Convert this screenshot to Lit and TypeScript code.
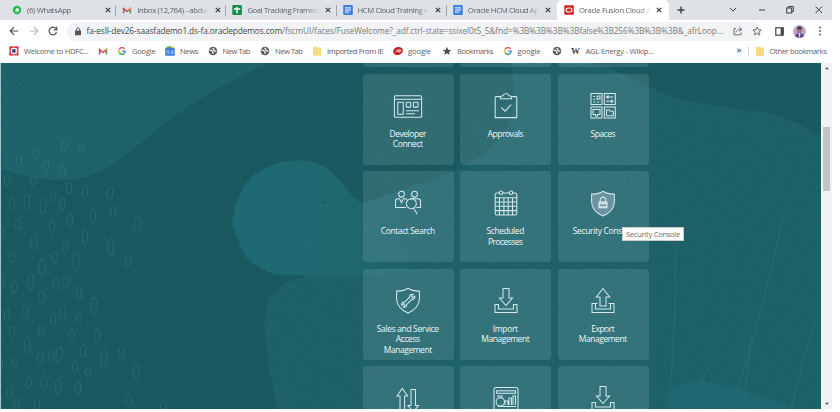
import { LitElement, html, svg, css } from "lit";
import { customElement, property } from "lit/decorators.js";

/** A line of text whose tracking is set so that it spans a given width. */
@customElement("fit-text")
class FitText extends LitElement {
  @property({ type: Number }) width = 0;
  @property() text = "";
  static styles = css`
    :host { display: inline-block; white-space: nowrap; flex: none; }
    span { display: inline-block; white-space: pre; }
  `;
  updated() {
    const s = this.renderRoot.querySelector("span") as HTMLElement;
    s.style.letterSpacing = "0";
    const natural = s.getBoundingClientRect().width;
    if (this.width && natural) {
      s.style.letterSpacing = `${(this.width - natural) / this.text.length}px`;
    }
  }
  render() {
    return html`<span>${this.text}</span>`;
  }
}

const glyphs: Record<string, unknown> = {
  whatsapp: svg`<circle cx="5" cy="5" r="4.2" fill="#1fc04f"/><path d="M3.400 7l.3-1.500a1.700 1.700 0 1 1 1 1z" fill="#fff"/>`,
  gmail: svg`<path d="M1 8.2V2.6L5 5.5 9 2.6v5.6" fill="none" stroke="#fff"/><path d="M.8 2.8h1.7v5.6H.8z" fill="#7a6db5"/><path d="M7.5 2.8h1.7v5.6H7.5z" fill="#45965a"/><path d="M.8 2.2L5 5.5l4.2-3.3v2L5 7.2.8 4.2z" fill="#dc4236"/><path d="M7.5 3.2l1.7-1.4v2.4L7.5 5.3z" fill="#edb62c"/>`,
  sheet: svg`<rect x=".3" y="0" width="9.6" height="10" rx="1" fill="#168d4d"/><path d="M5 2v6.2M2 4h6.2" stroke="#fff" stroke-width="1.5"/>`,
  doc: svg`<rect x=".2" y="0" width="9.6" height="10" rx="1" fill="#3e7fe0"/><path d="M2 2.9h6M2 5h6M2 7.1h4" stroke="#fff"/>`,
  oracle: svg`<rect x=".3" y=".3" width="9.5" height="9.4" rx=".8" fill="#d8201e"/><rect x="2.2" y="3" width="5.7" height="4" rx="1.8" fill="none" stroke="#fff" stroke-width="1.2"/>`,
  hdfc: svg`<rect x=".3" y=".3" width="9.2" height="9.2" fill="#dc3440"/><rect x="2" y="2" width="5.8" height="5.8" fill="#fff"/><rect x="3.2" y="3.2" width="3.400" height="3.400" fill="#174b94"/><path d="M4.9 0v2M4.9 7.8v2M0 4.9h2M7.8 4.9h2" stroke="#fff" stroke-width=".5"/>`,
  google: svg`<g fill="none" stroke-width="1.4"><path d="M7.6 2.8A3.3 3.3 0 0 0 2.2 3.3" stroke="#e5483a"/><path d="M2.2 3.3a3.3 3.3 0 0 0 0 3.4" stroke="#f1b51c"/><path d="M2.2 6.7a3.3 3.3 0 0 0 5 .8" stroke="#3aa757"/><path d="M7.2 7.5A3.2 3.2 0 0 0 8.2 5.1H5" stroke="#4386ed"/></g>`,
  news: svg`<path d="M1.500 1L6 0l.5 2.300H1.500z" fill="#49a25c"/><path d="M6 .5l3 .5v2H5.500z" fill="#e7b83b"/><rect x=".2" y="2.1" width="9.6" height="7.700" rx=".8" fill="#3f7fdc"/><path d="M4.2 4.900a1.400 1.400 0 1 0 .3 1.300H3.300M6 5h2.500M6 6.200h2.500M6 7.400h2.500" stroke="#e6effd" fill="none" stroke-width=".6"/>`,
  globe: svg`<circle cx="5" cy="5" r="4.300" fill="#55595e"/><path d="M1.200 4.200C3 4 4.500 4.300 4.300 5.300s1 1 .8 2.600M5 1.700c-.6 1.600 1.200.7 1 1.600S5.200 4.500 6.200 5s1.300-.2 2.300.3" stroke="#fff" stroke-width="1.150" fill="none"/>`,
  folder: svg`<path d="M1 .8h3.500l.8.8h3.700v7.700H1z" fill="#f6dc80"/><path d="M1 9.300h8" stroke="#e6c566" stroke-width=".5"/>`,
  red: svg`<ellipse cx="5" cy="5" rx="4.900" ry="3.900" transform="rotate(-20 5 5)" fill="#c8171e"/><path d="M2.400 6.400L4.800 3.400l.2 2.800M5.600 6.100l.6-2.400 1.600.2-.5 1.900z" stroke="#fff" stroke-width=".8" fill="none"/>`,
  star: svg`<path d="M5 .8l1.200 2.900 3.100.2-2.400 2 .8 3L5 7.300 2.300 8.900l.8-3-2.400-2 3.100-.2z" fill="#484c50"/>`,
};
const glyph = (n: string) => html`<svg class="glyph" viewBox="0 0 10 10">${glyphs[n]}</svg>`;

const tabs: [string, string, number][] = [
  ["whatsapp", "(6) WhatsApp", 44],
  ["gmail", "Inbox (12,764) - abdul", 71],
  ["sheet", "Goal Tracking Framew", 72],
  ["doc", "HCM Cloud Training v", 70],
  ["doc", "Oracle HCM Cloud Ap", 71],
  ["oracle", "Oracle Fusion Cloud A", 72],
];

// icon, label, label width, width of the slot up to the next bookmark
const bookmarks: [string, string, number, number][] = [
  ["hdfc", "Welcome to HDFC...", 64.5, 88.5],
  ["gmail", "", 0, 19.5],
  ["google", "Google", 23.5, 48],
  ["news", "News", 18, 42.5],
  ["globe", "New Tab", 27.500, 52.500],
  ["globe", "New Tab", 27.500, 52],
  ["folder", "Imported From IE", 56, 81],
  ["red", "google", 23, 49],
  ["star", "Bookmarks", 36, 60.500],
  ["google", "google", 23, 49],
  ["globe", "", 0, 19],
  ["wiki", "AGL Energy - Wikip...", 68, 90],
];

const shield = svg`<path d="M15 1.300C11.500 3.700 8 4.200 3.600 4.100v7.500c0 7 5.200 11.800 11.400 14.500 6.200-2.700 11.400-7.500 11.400-14.500V4.100C22 4.200 18.500 3.700 15 1.300z"/>`;
const importIcon = svg`<path d="M12 1.500h6v9.500h3.500L15 18.500 8.500 11H12z"/><path d="M4 17.500h3.500V22h15v-4.500H26v8H4z"/>`;

const icons: Record<string, unknown> = {
  developer: svg`<rect x="1.400" y="3.800" width="27.200" height="21.500" rx="1"/><path d="M1.400 7.300h27.200"/><rect x="4.800" y="10.300" width="5.500" height="12"/><rect x="13.300" y="10.300" width="4.500" height="4.800" rx=".7"/><rect x="20.500" y="10.300" width="4.500" height="4.800" rx=".7"/><path d="M13 18.700h13M13 21.700h9"/>`,
  approvals: svg`<path d="M10 4.600H5.200q-1 0-1 1v20h21.600v-20q0-1-1-1H20"/><path d="M9.500 6.800V5.200q0-1.300 2.600-1.500a3 3 0 0 1 5.800 0q2.600.2 2.600 1.500v1.600z"/><path d="M10.200 15.300l3.800 3.900 6.200-6.600"/>`,
  spaces: svg`<rect x="3" y="1.500" width="11" height="11"/><rect x="16.300" y="1.500" width="11" height="11"/><rect x="3" y="15" width="11" height="11"/><rect x="16.300" y="15" width="11" height="11"/><path d="M5.300 4.500h2M5.300 7.200h2M5.300 10h2M9 10h2M9.300 8V4h2.700v3H9.300M18.500 5h7M20.500 3.500L18.500 5l2 1.500M18 9.200h7M23 7.700l2 1.500-2 1.500M5 17.500h7v5H9.500v1.500h-2v-1.500H5zM18.500 18h3l1 1.300h2.800v4.500h-6.800z"/>`,
  contact: svg`<circle cx="8.500" cy="4.200" r="2.900"/><circle cx="21.500" cy="4.200" r="2.900"/><path d="M13 17.500H2.500V11q0-2.300 2.500-2.300h1.500l2 3.800 2-3.800h1.800q1.200 0 1.700 1M17 9.200q.8-.5 2-.5h6q2.500 0 2.500 2.300v6.500h-4"/><circle cx="18.300" cy="13.700" r="5"/><path d="M20.800 18.200l3.500 6"/>`,
  calendar: svg`<path d="M8.500 3H6Q4.200 3 4.200 4.800v18.400q0 1.800 1.800 1.800h18q1.800 0 1.800-1.800V4.800Q25.800 3 24 3h-2.500M11.500 3h7M4.200 7.700h21.600M4.200 12h21.600M4.200 16.300h21.600M4.200 20.600h21.600M8.500 7.700V25M12.900 7.700V25M17.200 7.700V25M21.500 7.700V25"/><circle cx="10" cy="2.700" r="1.700"/><circle cx="20" cy="2.700" r="1.700"/>`,
  security: svg`<g class="tint">${shield}</g><path d="M12.300 12.500v-2.700a2.700 2.700 0 0 1 5.400 0v2.700"/><rect x="11" y="12" width="8" height="5.800" fill="#c8dcde"/><path d="M12 15.200h6" class="slot"/>`,
  sales: svg`${shield}<path d="M11.600 15.200l5-5c-.3-2 1.400-3.500 3.500-2.900l-1.700 1.900 1.400 1.500 2-1.600c.5 2.100-1.200 3.700-3 3.200l-5 5c.4 2-1.500 3.400-3.400 2.800l1.700-1.900-1.400-1.500-2 1.700c-.6-2 1-3.600 2.900-3.200z"/>`,
  import: importIcon,
  export: svg`<path d="M12 19V10H8.300L15 1.500 21.700 10H18v9z"/><path d="M9.500 16.500H4v9h22v-9h-5.500"/><path d="M7.500 16.500v5.500h15v-5.500"/>`,
  updown: svg`<path d="M7 30V11H4L9.300 3.500 14.600 11h-3V30"/><path d="M18 4.500h4.500v16h3L20.300 27 15 20.500h3z"/>`,
  report: svg`<path d="M3 26V4.500q0-2 2-2h20q2 0 2 2V26"/><rect x="5.500" y="5.800" width="19" height="2.500"/><path d="M6 11h6"/><circle cx="9.300" cy="16.800" r="4.200"/><path d="M14 20v-4h3v4M18 20v-7h2.500v7M22 20v-9h2.500v9M7 21.500h18"/>`,
};

const tiles: [string, string[]][] = [
  ["", []], ["", []], ["", []],
  ["developer", ["Developer", "Connect"]],
  ["approvals", ["Approvals"]],
  ["spaces", ["Spaces"]],
  ["contact", ["Contact Search"]],
  ["calendar", ["Scheduled", "Processes"]],
  ["security", ["Security Console"]],
  ["sales", ["Sales and Service", "Access", "Management"]],
  ["import", ["Import", "Management"]],
  ["export", ["Export", "Management"]],
  ["updown", []],
  ["report", []],
  ["import", []],
];
const labelWidths: Record<string, number> = {
  Developer: 36.500, Connect: 30, Approvals: 35.500, Spaces: 24.500, "Contact Search": 54,
  Scheduled: 37.500, Processes: 34.500, "Security Console": 60, "Sales and Service": 62,
  Access: 24, Management: 48, Import: 25, Export: 23,
};

// cx, cy, ry of the small loops on the left of the wallpaper
const loops: [number, number, number][] = [
  [19, 161, 6], [36, 153, 5], [46, 166, 7], [64, 145, 6], [81, 148, 4], [63, 171, 5],
  [7, 180, 6], [33, 180, 6], [69, 188, 6], [85, 191, 7], [110, 193, 7], [12, 204, 5],
  [27, 201, 7.500], [43, 206, 7.500], [53, 197, 5], [62, 204, 7], [93, 215, 7], [113, 212, 5],
  [18, 224, 5], [70, 220, 7], [52, 226, 6], [137, 224, 8], [34, 241, 7.500], [85, 237, 7],
  [65, 246, 6.500], [111, 247, 8.500], [12, 257, 5], [55, 257, 6], [42, 267, 8.500], [76, 261, 9],
  [128, 261, 6.500], [31, 281, 8], [14, 287, 6], [56, 284, 6.500], [66, 282, 6], [42, 297, 6.500],
  [79, 293, 6.500], [94, 305, 8], [7, 314, 6], [25, 312, 7.500], [53, 319, 6], [63, 313, 7.500],
  [79, 318, 4.500], [12, 331, 5], [41, 330, 6], [27, 345, 9], [72, 335, 6.500], [97, 335, 7],
  [83, 350, 6.500], [15, 361, 5.500], [40, 358, 6.500], [51, 356, 6.500], [59, 354, 8], [104, 358, 10],
  [121, 353, 6.500], [75, 366, 6], [88, 372, 4], [136, 371, 8.500], [29, 382, 6], [44, 382, 7.500],
  [58, 386, 8.500], [78, 387, 7], [10, 392, 6.500], [17, 403, 6], [37, 405, 6], [129, 400, 6], [163, 405, 5],
  [1, 233, 7], [1, 281, 6], [0, 364, 7],
];

const cross = html`<svg class="cross" viewBox="0 0 6 6"><path d="M.8.8l4.400 4.400M5.200.8L.8 5.200"/></svg>`;

@customElement("app-root")
class AppRoot extends LitElement {
  static styles = css`
    :host { display: block; width: 840px; height: 412px; background: #fff; overflow: hidden;
      font-family: "Open Sans", "Noto Sans", sans-serif; }
    .window { width: 832px; height: 409px; display: flex; flex-direction: column; overflow: hidden; }
    .glyph { width: 10px; height: 10px; flex: none; display: block; }
    svg { flex: none; }

    .tabs { height: 20px; flex: none; background: #dee1e6; display: flex; padding-left: 6px; box-sizing: border-box; }
    .tab { width: 110.200px; flex: none; box-sizing: border-box; display: flex; align-items: center;
      padding-left: 6px; font-size: 7.700px; color: #5c6065; }
    .tab .name { width: 72px; margin-left: 5px; overflow: hidden; line-height: 12px;
      -webkit-mask-image: linear-gradient(90deg, #000 82%, transparent 100%); mask-image: linear-gradient(90deg, #000 82%, transparent 100%); }
    .tab.plain { border-right: 1px solid #a2a6ab; height: 11px; margin-top: 4.500px; }
    .tab.last { border-right-color: transparent; }
    .tab.active { background: #fff; border-radius: 5px 5px 0 0; width: 112px; padding-left: 7px; }
    .cross { width: 6px; height: 6px; margin-left: 5.500px; }
    .cross path, .ctl path, .ctl rect { fill: none; stroke: #3c4043; stroke-width: 1; }
    .cross path { stroke-width: 1.200; }
    .controls { flex: 1; display: flex; align-items: center; }
    .ctl { width: 10px; height: 10px; }
    .plus { margin-left: 7.500px; margin-right: 42px; }
    .plus path { stroke-width: 1.400; }
    .c2 { margin-right: 18.500px; }

    .toolbar { height: 22px; flex: none; display: flex; align-items: center; padding-left: 9px; }
    .nav { width: 10px; height: 10px; margin-right: 9.500px; }
    .nav path { fill: none; stroke: #4a4e52; stroke-width: 1.200; }
    .nav .dim { stroke: #b4b7ba; }
    .omni { width: 695px; height: 19px; border-radius: 10px; background: #f1f3f4; display: flex; align-items: center;
      font-size: 8.300px; color: #777b80; line-height: 12px; margin-left: -1px; }
    .omni .host { color: #44474b; }
    .lock { width: 8px; height: 9px; margin: 0 5px 0 7px; }
    .ob { width: 10px; height: 10px; margin-left: 9.500px; }
    .ob path { fill: none; stroke: #5f6368; stroke-width: .9; }
    .panel { width: 9px; height: 9px; margin-left: 13px; }
    .avatar { width: 13px; height: 13px; margin-left: 9px; }
    .dots { width: 4px; height: 10px; margin-left: 12px; }

    .marks { height: 20.500px; flex: none; display: flex; align-items: center; padding-left: 9px; box-sizing: border-box;
      font-size: 7.600px; color: #5c6065; padding-bottom: 2px; }
    .mark { display: flex; align-items: center; gap: 5px; flex: none; line-height: 12px; }
    .wiki { width: 10px; text-align: center; font: bold 9px "Liberation Serif", serif; color: #444; }
    .more { margin-left: 76px; font-size: 9px; font-weight: 600; width: 11px; line-height: 10px; margin-top: -2px; }
    .rule { width: 1px; height: 11px; background: #d5d7d9; margin-right: 6px; }

    .body { flex: 1; display: flex; min-height: 0; }
    .edge { width: 1px; background: #a7c4c9; }
    .page { position: relative; width: 820px; overflow: hidden; background: #19585f; display: flex; }
    .wall { position: absolute; left: -1px; top: 0; width: 821px; height: 347px; }
    .grid { position: relative; margin-left: 361.500px; display: grid; grid-template-columns: repeat(3, 91px);
      grid-template-rows: 4.800px repeat(3, 91px) 60px; gap: 6.500px; flex: none; }
    .tile { background: rgba(225, 245, 255, .12); border-radius: 3px; display: flex; flex-direction: column; align-items: center; color: #eef7f7; }
    .tile.cut { border-radius: 0 0 3px 3px; }
    .pic { width: 30px; height: 30px; margin: 18.500px 0 6.500px; fill: none; stroke: #d3e8e9; stroke-width: 1.050; overflow: visible; }
    .pic .tint { fill: rgba(190, 195, 215, .4); }
    .pic .slot { stroke: #47737a; }
    .label { font-size: 8.500px; line-height: 10.400px; height: 10.400px; margin-left: -.5px; }
    .tip { position: absolute; left: 621px; top: 164px; width: 62px; height: 14px; box-sizing: border-box; background: #fff;
      border: .5px solid #c9cccd; font-size: 7.500px; line-height: 12px; color: #6d6d6d; display: flex; justify-content: center; }
    .scroll { flex: 1; background: #f1f2f2; display: flex; flex-direction: column; align-items: center; }
    .arrow { width: 6px; height: 6px; margin: 2px 0; }
    .thumb { width: 7.500px; height: 64px; background: #c2c3c4; margin-top: 54px; margin-bottom: auto; }
  `;

  render() {
    return html`
      <div class="window">
        <div class="tabs">
          ${tabs.map(([i, t, w], n) => html`
            <div class="tab ${n === 5 ? "active" : n === 4 ? "plain last" : "plain"}">
              ${glyph(i)}
              <div class="name"><fit-text .text=${t} .width=${w}></fit-text></div>
              ${cross}
            </div>`)}
          <div class="controls">
            <svg class="ctl plus" viewBox="0 0 10 10"><path d="M5 1.500v7M1.500 5h7" /></svg>
            <svg class="ctl c2" viewBox="0 0 10 10"><path d="M2 3l3 3 3-3" /></svg>
            <svg class="ctl c2" viewBox="0 0 10 10"><path d="M2 5h6" /></svg>
            <svg class="ctl c2" viewBox="0 0 10 10"><rect x="1.700" y="3" width="5" height="5" /><path d="M3.300 3V1.500h5v5H6.700" /></svg>
            <svg class="ctl" viewBox="0 0 10 10"><path d="M1.500 1.500l6.500 6.500M8 1.500L1.500 8" /></svg>
          </div>
        </div>
        <div class="toolbar">
          <svg class="nav" viewBox="0 0 10 10"><path d="M9.300 5H1.200M5 1.200L1.200 5 5 8.800" /></svg>
          <svg class="nav" viewBox="0 0 10 10"><path class="dim" d="M.7 5h8.100M5 1.200L8.800 5 5 8.800" /></svg>
          <svg class="nav" viewBox="0 0 10 10"><path d="M8.500 6.200A3.800 3.800 0 1 1 7.800 2.500M8.800.8v3H5.800" /></svg>
          <div class="omni">
            <svg class="lock" viewBox="0 0 8 9"><rect x="1" y="3.600" width="6" height="4.700" rx=".5" fill="#53575b" /><path d="M2.400 3.800V2.500a1.600 1.600 0 0 1 3.200 0v1.300" fill="none" stroke="#53575b" /></svg>
            <fit-text class="host" .text=${"fa-esll-dev26-saasfademo1.ds-fa.oraclepdemos.com"} .width=${195.500}></fit-text>
            <fit-text .text=${"/fscmUI/faces/FuseWelcome?_adf.ctrl-state=ssixel0t5_5&fnd=%3B%3B%3B%3Bfalse%3B256%3B%3B%3B&_afrLoop..."} .width=${441}></fit-text>
            <svg class="ob" viewBox="0 0 10 10"><path d="M3 2.500H1v6.300h7V6.500M2.800 6.500Q3.500 3.300 8.500 3.300M6.300 1l2.500 2.300L6.300 5.600" /></svg>
            <svg class="ob" viewBox="0 0 10 10"><path d="M5 1l1.200 2.700 2.900.3-2.200 2 .6 2.900L5 7.400 2.500 8.900l.6-2.900L.9 4l2.900-.3z" /></svg>
          </div>
          <svg class="panel" viewBox="0 0 9 9"><rect x=".8" y=".8" width="7.400" height="7.400" fill="#fff" stroke="#3f4246" stroke-width="1.200" /><path d="M5.700 1h2.500v7H5.700z" fill="#3f4246" /></svg>
          <svg class="avatar" viewBox="0 0 13 13">
            <circle cx="6.500" cy="6.500" r="6.400" fill="#b5a3cf" />
            <path d="M2.200 11.200q.6-3.200 4.300-3.200t4.300 3.200a6.400 6.400 0 0 1-8.600 0z" fill="#5a4c80" />
            <path d="M5.500 8h2l-.6 4.500h-.8z" fill="#e7d4df" />
            <ellipse cx="6.500" cy="5" rx="2.400" ry="3.100" fill="#a06c70" /><path d="M4 4.500a2.500 3 0 0 1 5 0Q6.500 2.800 4 4.500z" fill="#3e3240" />
          </svg>
          <svg class="dots" viewBox="0 0 4 10"><g fill="#4a4e52"><circle cx="2" cy="1.500" r=".9" /><circle cx="2" cy="5" r=".9" /><circle cx="2" cy="8.500" r=".9" /></g></svg>
        </div>
        <div class="marks">
          ${bookmarks.map(([i, t, w, slot]) => html`
            <div class="mark" style="width:${slot}px">
              ${i === "wiki" ? html`<span class="wiki">W</span>` : glyph(i)}
              ${t ? html`<fit-text .text=${t} .width=${w}></fit-text>` : ""}
            </div>`)}
          <span class="more">»</span><span class="rule"></span>
          <div class="mark">${glyph("folder")}<fit-text .text=${"Other bookmarks"} .width=${57}></fit-text></div>
        </div>
        <div class="body">
          <div class="edge"></div>
          <div class="page">
            <svg class="wall" viewBox="0 62.500 821 347" preserveAspectRatio="none">
              <defs>
                <linearGradient id="blob" x1="0" x2="1" y1="0" y2="0"><stop offset="0" stop-color="#1e6871" /><stop offset=".5" stop-color="#1f6870" /><stop offset="1" stop-color="#1d6068" /></linearGradient>
                <filter id="grain" x="0" y="0" width="100%" height="100%"><feTurbulence type="fractalNoise" baseFrequency=".3" numOctaves="2" seed="4" /><feColorMatrix values="0 0 0 0 .45  0 0 0 0 .75  0 0 0 0 .78  .5 0 0 0 -.2" /></filter>
              </defs>
              <path d="M0 62H270C225 83 195 99 160 127S110 170 80 178C55 182 25 178 0 169z" fill="#1d626a" />
              <path d="M362 203L452 172C490 152 514 132 514 100Q514 80 511 62H590C612 66 625 76 650 87 690 106 700 100 740 109 780 111 800 124 821 135V410H277C270 370 263 345 265 315 268 290 285 280 303 277z" fill="#1d6068" />
              <path d="M232 225C234 205 240 188 252 176 272 162 285 160 304 160 325 161 338 177 346 188Q354 198 363 203L430 180V277L275 274Q258 268 247 258 240 245 232 225z" fill="url(#blob)" />
              <g fill="none" stroke="#4c949a" stroke-width=".8" opacity=".36">
                ${loops.map(([x, y, r]) => svg`<ellipse cx=${x} cy=${y} rx=${r > 7 ? 3 : 2.700} ry=${r} transform="rotate(${(x % 3) * 3} ${x} ${y})"/>`)}
              </g>
              <g fill="none" stroke="#30767e" stroke-width="1" opacity=".55">
                <path d="M783 215C768 290 750 350 736 395M751 335Q748 370 744 398M675 245Q677 330 668 405M815 320Q800 370 791 408M720 353Q705 370 700 388" />
              </g>
              <path d="M672 386Q700 376 735 388 770 399 798 409H669z" fill="#22737c" opacity=".4" />
              <g fill="#103d46" opacity=".7"><circle cx="323" cy="202" r="1" /><circle cx="246" cy="227" r=".8" /><circle cx="297" cy="181" r=".6" /></g>
              <rect x="0" y="62" width="821" height="348" filter="url(#grain)" opacity=".12" />
            </svg>
            <div class="grid">
              ${tiles.map(([i, lines]) => html`
                <div class="tile ${i ? "" : "cut"}">
                  ${i ? html`<svg class="pic" viewBox="0 0 30 30">${icons[i]}</svg>` : ""}
                  ${lines.map((l) => html`<fit-text class="label" .text=${l} .width=${labelWidths[l]}></fit-text>`)}
                </div>`)}
            </div>
            <div class="tip"><fit-text .text=${"Security Console"} .width=${54}></fit-text></div>
          </div>
          <div class="scroll">
            <svg class="arrow" viewBox="0 0 6 6"><path d="M1 4.300l2-2.300 2 2.300z" fill="#505050" /></svg>
            <div class="thumb"></div>
            <svg class="arrow" viewBox="0 0 6 6"><path d="M1 1.700L3 4l2-2.300z" fill="#505050" /></svg>
          </div>
        </div>
      </div>`;
  }
}
